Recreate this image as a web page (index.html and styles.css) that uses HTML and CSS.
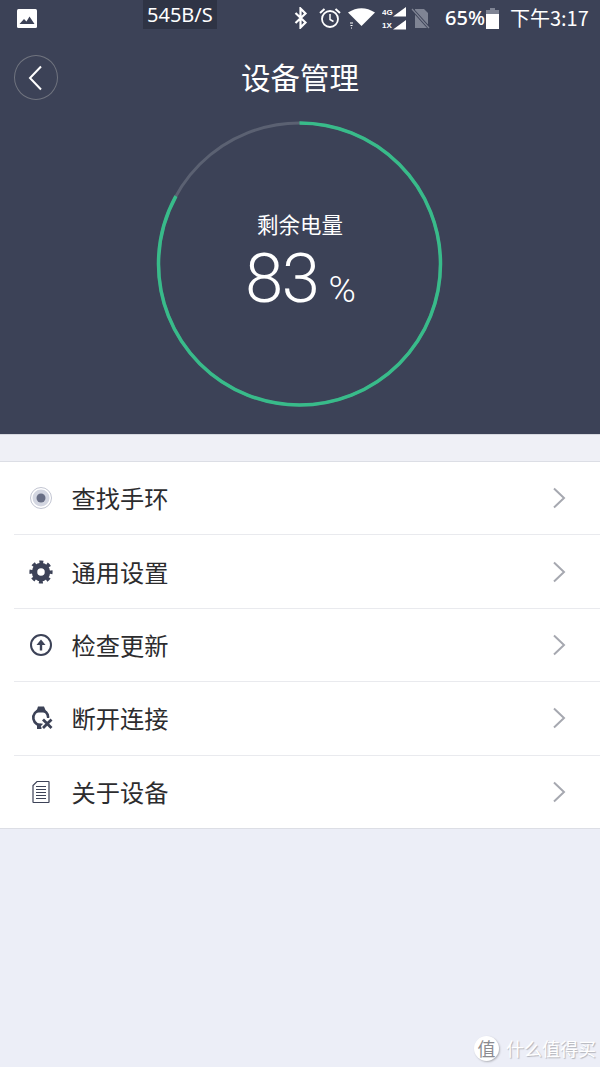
FILE: index.html
```html
<!DOCTYPE html>
<html lang="zh-CN">
<head>
<meta charset="utf-8">
<title>设备管理</title>
<link rel="stylesheet" href="styles.css">
</head>
<body>
<div class="phone">
  <header class="hero">
    <div class="status">
      <svg class="st-img" width="20" height="19" viewBox="0 0 20 19"><rect width="20" height="19" rx="1.500" fill="#fff"/><path d="M2.500 15l4.500-5 2.500 2.500 3-5 5 7.500z" fill="#3c4257"/></svg>
      <span class="speed">545B/S</span>
      <svg class="st-bt" width="14" height="22" viewBox="0 0 14 22"><path d="M1.500 6l10 9.500-5 5V1.500l5 5-10 9.500" fill="none" stroke="#fff" stroke-width="2.200"/></svg>
      <svg class="st-alarm" width="22" height="22" viewBox="0 0 22 22"><circle cx="11" cy="12" r="8" fill="none" stroke="#fff" stroke-width="1.800"/><path d="M11 7v5.500l3.500 2" fill="none" stroke="#fff" stroke-width="1.500"/><path d="M1 6l4.500-4M21 6l-4.500-4" stroke="#fff" stroke-width="2"/></svg>
      <svg class="st-wifi" width="27" height="22" viewBox="0 0 27 22"><path d="M0 5.500Q13.500-3 27 5.500L13.500 19z" fill="#fff"/><path d="M2 16h3M2.500 18.500h2M3 21h1" stroke="#fff" stroke-width="1"/></svg>
      <svg class="st-sig" width="25" height="24" viewBox="0 0 25 24"><path d="M11 10.500L24 1v9.500zM11 23.500L24 14v9.500z" fill="#fff"/><text x="0" y="9" class="st-mini">4G</text><text x="0" y="22" class="st-mini">1X</text></svg>
      <svg class="st-sim" width="19" height="21" viewBox="0 0 19 21"><path d="M4 1h9l4 4v15H4z" fill="#7f8494"/><path d="M1 1l17 19" stroke="#3c4257" stroke-width="3"/><path d="M1 1l17 19" stroke="#7f8494" stroke-width="1.200"/></svg>
      <span class="st-pct">65%</span>
      <svg class="st-bat" width="13" height="21" viewBox="0 0 13 21"><path d="M4 0h5v2h4v5H0V2h4z" fill="#7f8494"/><path d="M0 6h13v15H0z" fill="#fff"/></svg>
      <span class="st-time">下午3:17</span>
    </div>
    <div class="nav">
      <button class="back" type="button" aria-label="返回">
        <svg width="14" height="26" viewBox="0 0 14 26"><path d="M13 1.500L2 13l11 11.500" fill="none" stroke="#fff" stroke-width="2"/></svg>
      </button>
      <h1 class="title">设备管理</h1>
    </div>
    <div class="gauge">
      <svg class="ring" width="290" height="290" viewBox="0 0 290 290">
        <circle class="ring-track" cx="144.500" cy="145" r="141"/>
        <circle class="ring-value" cx="144.500" cy="145" r="141" pathLength="100" stroke-dasharray="83 17" transform="rotate(-90 144.500 145)"/>
      </svg>
      <div class="reading">
        <div class="reading-label">剩余电量</div>
        <div class="reading-value"><span class="num">83</span><span class="unit">%</span></div>
      </div>
    </div>
  </header>
  <div class="band"></div>

  <ul class="menu">
    <li class="row">
      <svg class="ico" width="24" height="24" viewBox="0 0 24 24"><circle cx="12" cy="12" r="10.500" fill="#fff" stroke="#c2c5d2" stroke-width="1"/><circle cx="12" cy="12" r="8.500" fill="#d3d6e1"/><circle cx="12" cy="12" r="4.500" fill="#686e85"/></svg>
      <span class="label">查找手环</span>
      <svg class="chev" width="14" height="22" viewBox="0 0 14 22"><path d="M2 1.500L12 11 2 20.500" fill="none" stroke="#a6a8b0" stroke-width="2"/></svg>
    </li>
    <li class="row">
      <svg class="ico" width="24" height="24" viewBox="0 0 24 24"><circle cx="12" cy="12" r="6.500" fill="none" stroke="#3c4257" stroke-width="5.500"/><circle cx="12" cy="12" r="9.800" fill="none" stroke="#3c4257" stroke-width="3.600" stroke-dasharray="3.850 3.850" stroke-dashoffset="1.925"/></svg>
      <span class="label">通用设置</span>
      <svg class="chev" width="14" height="22" viewBox="0 0 14 22"><path d="M2 1.500L12 11 2 20.500" fill="none" stroke="#a6a8b0" stroke-width="2"/></svg>
    </li>
    <li class="row">
      <svg class="ico" width="24" height="24" viewBox="0 0 24 24"><circle cx="12" cy="12" r="10" fill="none" stroke="#3c4257" stroke-width="2"/><path d="M12 17.500V9" fill="none" stroke="#3c4257" stroke-width="2.400"/><path d="M7.500 12L12 6.500l4.500 5.500z" fill="#3c4257"/></svg>
      <span class="label">检查更新</span>
      <svg class="chev" width="14" height="22" viewBox="0 0 14 22"><path d="M2 1.500L12 11 2 20.500" fill="none" stroke="#a6a8b0" stroke-width="2"/></svg>
    </li>
    <li class="row">
      <svg class="ico" width="24" height="24" viewBox="0 0 24 24"><path d="M7 6.500L9 .5h6l2.500 6z" fill="#3c4257"/><path d="M14 18.800A7.500 7.500 0 1 1 19.300 12" fill="none" stroke="#3c4257" stroke-width="2.600"/><path d="M8 17.500h4.500V23H8z" fill="#3c4257"/><path d="M13.500 13l9 9M22.500 13l-9 9" stroke="#fff" stroke-width="5"/><path d="M14 13.500l8.500 8.500M22.500 13.500L14 22" stroke="#3c4257" stroke-width="2.800"/></svg>
      <span class="label">断开连接</span>
      <svg class="chev" width="14" height="22" viewBox="0 0 14 22"><path d="M2 1.500L12 11 2 20.500" fill="none" stroke="#a6a8b0" stroke-width="2"/></svg>
    </li>
    <li class="row">
      <svg class="ico" width="24" height="24" viewBox="0 0 24 24"><path d="M8 1.500h11.500a.5.5 0 0 1 .5.500v20a.5.5 0 0 1-.5.500h-15a.5.5 0 0 1-.5-.500V5.500z" fill="#fff" stroke="#3c4257" stroke-width="1.200"/><path d="M7 6.500h10M7 9.500h10M7 12.500h10M7 15.500h10M7 18.500h10" stroke="#3c4257" stroke-width="1.100"/></svg>
      <span class="label">关于设备</span>
      <svg class="chev" width="14" height="22" viewBox="0 0 14 22"><path d="M2 1.500L12 11 2 20.500" fill="none" stroke="#a6a8b0" stroke-width="2"/></svg>
    </li>
  </ul>

  <div class="mark">
    <span class="mark-badge">值</span>
    <span class="mark-text">什么值得买</span>
  </div>
</div>
</body>
</html>
```

FILE: styles.css
```css
* { box-sizing: border-box; }
html, body { margin: 0; padding: 0; }
body { font-family: "Noto Sans CJK SC", "Noto Sans", sans-serif; }

.phone {
  position: relative;
  width: 600px;
  height: 1067px;
  overflow: hidden;
  background: #eceef7;
}

/* Header */
.hero {
  height: 435px;
  background: #3c4257;
  border-bottom: 1px solid #d6d8df;
  color: #fff;
}

.status {
  position: relative;
  display: flex;
  align-items: center;
  height: 36px;
  padding-left: 17px;
  white-space: nowrap;
}
.st-img, .st-bt, .st-alarm, .st-wifi, .st-sig, .st-sim, .st-bat { flex: none; }
.st-bt { margin-left: 257px; }
.st-alarm { margin-left: 11px; }
.st-wifi { margin-left: 7px; }
.st-sig { margin-left: 7px; }
.st-sim { margin-left: 4px; }
.st-bat { margin-left: 1px; }
.st-mini { font: 700 8px "Liberation Sans", sans-serif; fill: #fff; }
.st-pct { margin-left: 15px; font: 500 20px/1 "Noto Sans", sans-serif; }
.st-time { margin-left: 11px; font-size: 20px; line-height: 1; }

.speed {
  position: absolute;
  left: 143px;
  top: 0;
  height: 29px;
  padding: 0 4px;
  background: #2f3445;
  font: 400 20px/29px "Noto Sans", sans-serif;
}

.nav {
  position: relative;
  display: flex;
  align-items: center;
  justify-content: center;
  height: 83px;
}
.title {
  margin: -2px 0 0;
  font-size: 29.500px;
  font-weight: 400;
  line-height: 1.2;
}
.back {
  position: absolute;
  left: 14px;
  top: 19px;
  width: 44px;
  height: 45px;
  padding: 0 3px 0 0;
  display: flex;
  align-items: center;
  justify-content: center;
  background: none;
  border: 1px solid #70747f;
  border-radius: 50%;
}

/* Gauge */
.gauge {
  display: grid;
  justify-content: center;
  align-items: center;
}
.ring, .reading { grid-area: 1 / 1; }
.ring { display: block; }
.ring-track { fill: none; stroke: #5b6172; stroke-width: 3; }
.ring-value { fill: none; stroke: #38bb8a; stroke-width: 3.500; }
.reading { text-align: center; margin-top: -3px; }
.reading-label { font-size: 21.500px; line-height: 28px; }
.reading-value {
  display: flex;
  align-items: baseline;
  justify-content: center;
  padding-top: 4px;
  padding-left: 1px;
  height: 78px;
  font-family: Roboto, sans-serif;
  font-weight: 300;
}
.num { font-size: 69px; line-height: 74px; letter-spacing: -1.500px; }
.unit { margin-left: 10px; font-size: 37px; line-height: 40px; }

/* List */
.band { height: 26px; background: #eff0f6; }
.menu {
  list-style: none;
  margin: 0;
  padding: 0;
  background: #fff;
  border-top: 1px solid #dcdee5;
  border-bottom: 1px solid #dcdee5;
}
.row {
  display: flex;
  align-items: center;
  height: 73.400px;
  margin-left: 14px;
  padding-left: 15px;
  padding-right: 34px;
  border-bottom: 1px solid #e9eaee;
}
.row:last-child { border-bottom: 0; height: 72.400px; }
.ico { flex: none; }
.label {
  flex: 1;
  margin-left: 18.500px;
  margin-top: -1px;
  font-size: 24.250px;
  line-height: 1.2;
  color: #2c2c2e;
}
.chev { flex: none; }

/* Watermark */
.mark {
  position: absolute;
  right: 4px;
  bottom: 6px;
  display: flex;
  align-items: center;
  gap: 7px;
  color: #fff;
}
.mark-badge {
  width: 25px;
  height: 25px;
  border-radius: 50%;
  background: #fff;
  color: #8b8b90;
  font-size: 18px;
  line-height: 25px;
  text-align: center;
  box-shadow: 1px 1px 2px rgba(0,0,0,.25);
}
.mark-text {
  font-size: 18px;
  line-height: 1.2;
  text-shadow: 1px 1px 1px rgba(0,0,0,.25);
}
```
